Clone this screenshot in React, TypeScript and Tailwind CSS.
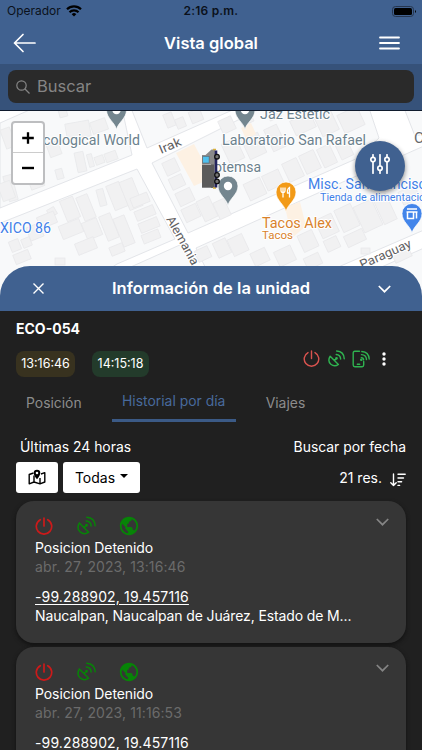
import React from "react";
import { BiWorld } from "react-icons/bi";

const FONT = "font-[Inter,'Liberation_Sans',sans-serif]";

/* Building footprints: x, y, width, height, rotation */
const buildings: number[][] = [
  [66, 122, 24, 16, -10], [59, 109, 8, 8, -15], [91, 120, 16, 12, -20], [76, 152, 9, 20, -12], [88, 154, 5, 13, -15],
  [95, 156, 9, 8, -20], [105, 152, 12, 9, -20], [56, 169, 7, 10, -15], [6, 175, 9, 26, -15], [0, 182, 13, 18, -20],
  [30, 180, 14, 8, -20], [98, 189, 7, 17, -15], [48, 208, 8, 8, -30], [63, 198, 14, 22, -22], [80, 195, 12, 25, -22],
  [110, 183, 14, 26, -22], [124, 179, 14, 30, -22], [131, 195, 18, 10, -22], [135, 208, 20, 10, -22], [139, 220, 20, 10, -22],
  [38, 214, 18, 12, -22], [28, 225, 14, 14, -22], [10, 240, 10, 11, -22], [22, 238, 9, 9, -22], [14, 252, 16, 10, -22],
  [60, 222, 22, 14, -22], [84, 220, 16, 18, -22], [103, 214, 12, 26, -22], [118, 216, 12, 30, -22], [55, 258, 10, 7, 0],
  [76, 240, 20, 12, -22], [110, 245, 14, 9, -22], [142, 232, 18, 9, -22], [3, 128, 10, 20, -20], [48, 142, 12, 14, -20],
  [165, 113, 9, 14, -22], [176, 118, 9, 10, -22], [190, 110, 12, 12, -22], [164, 160, 14, 14, -25], [170, 176, 14, 12, -25],
  [177, 190, 16, 14, -25], [183, 206, 16, 14, -25], [200, 198, 14, 22, -25], [216, 200, 12, 18, -25], [246, 180, 18, 18, -25],
  [264, 172, 18, 16, -25], [285, 160, 16, 20, -25], [302, 152, 16, 20, -25], [320, 146, 14, 20, -25], [338, 142, 13, 16, -25],
  [225, 140, 16, 22, -25], [245, 135, 18, 22, -25], [268, 126, 14, 24, -25], [292, 116, 22, 16, -25], [318, 114, 18, 20, -25],
  [340, 110, 22, 20, -25], [220, 118, 14, 14, -25], [240, 112, 12, 12, -25], [268, 110, 12, 9, -25],
  [196, 248, 14, 12, -25], [215, 240, 14, 16, -25], [230, 236, 16, 18, -25], [252, 250, 16, 14, -25], [276, 248, 18, 16, -25],
  [318, 216, 18, 20, -25], [338, 206, 18, 24, -25], [358, 202, 20, 28, -25], [378, 195, 14, 28, -25], [325, 238, 14, 12, -25],
  [345, 232, 20, 12, -25], [361, 248, 9, 6, 0], [305, 255, 16, 12, -25], [393, 250, 18, 10, -25], [400, 188, 18, 14, -25], [300, 232, 16, 18, -25],
];

const blocks = [
  "M0 123 L34 108 L122 108 L132 155 L0 208Z",
  "M131 108 L212 108 L237 108 L147 148Z",
  "M-2 224 L137 169 L175 239 L117 264 L60 302 L-2 302Z",
  "M152 163 L262 108 L369 108 L379 138 L358 158 L188 233Z",
  "M196 248 L300 201 L424 146 L424 230 L336 268 L280 292 L217 292Z",
  "M404 108 L424 108 L424 134 L415 136Z",
  "M124 270 L182 244 L206 290 L90 290Z",
  "M348 282 L424 248 L424 302 L340 302Z",
];

function Pin({ x, y, color, children }: { x: number; y: number; color: string; children?: React.ReactNode }) {
  return (
    <g transform={`translate(${x} ${y})`}>
      <path d="M0 18.5 C-1.5 11.5 -10 7.5 -10 -1 A10 10 0 0 1 10 -1 C10 7.5 1.5 11.5 0 18.5Z" fill={color} stroke="#fff" strokeWidth=".7" />
      {children ?? <circle r="4.2" cy="-1" fill="#fff" />}
    </g>
  );
}

function Label({ x, y, w, size, color, weight = 400, children }: { x: number; y: number; w: number; size: number; color: string; weight?: number; children: string }) {
  return (
    <text x={x} y={y} textLength={w} lengthAdjust="spacingAndGlyphs" fontSize={size} fill={color} fontWeight={weight} stroke="#fff" strokeWidth="2" strokeLinejoin="round" paintOrder="stroke">
      {children}
    </text>
  );
}

function MapView() {
  return (
    <svg viewBox="0 111 422 190" className="block h-[190px] w-full font-[Roboto,sans-serif]">
      <rect y="100" width="422" height="210" fill="#fff" />
      {blocks.map((d) => <path key={d} d={d} fill="#f8f9fa" stroke="#e0e2e6" strokeWidth=".9" />)}
      {buildings.map(([x, y, w, h, r], i) => (
        <rect key={i} x={x} y={y} width={w} height={h} transform={`rotate(${r} ${x + w / 2} ${y + h / 2})`} fill="#f1f1f2" stroke="#e8e9eb" strokeWidth=".8" />
      ))}
      <path d="M176 153 L194 144 L212 178 L194 186Z M241 128 L251 123 L256 134 L246 139Z M285 207 L300 202 L306 226 L292 238Z" fill="#fdf1e3" />
      <Label x={43} y={145} w={97} size={15} color="#6b818d">cological World</Label>
      <Label x={222} y={145} w={144} size={15} color="#6b818d">Laboratorio San Rafael</Label>
      <Label x={260} y={119} w={70} size={15} color="#6b818d">Jaz Estetic</Label>
      <Label x={214} y={171.500} w={47} size={15} color="#6b818d">otemsa</Label>
      <Label x={0} y={233} w={51} size={15} color="#3f7fe8">XICO 86</Label>
      <Label x={262} y={228} w={70} size={14.500} color="#d9822b">Tacos Alex</Label>
      <Label x={262} y={238.500} w={31} size={11} color="#d9822b">Tacos</Label>
      <Label x={308} y={189} w={126} size={15} color="#3f7fe8">Misc. San Francisco</Label>
      <Label x={320} y={201} w={111} size={11} color="#3f7fe8">Tienda de alimentación</Label>
      <Label x={414} y={143} w={10} size={14} color="#66686b">C</Label>
      <g transform="translate(161 154) rotate(-23)"><Label x={0} y={0} w={23} size={12.500} color="#5f6163">Irak</Label></g>
      <g transform="translate(166 219) rotate(61)"><Label x={0} y={0} w={54} size={12.500} color="#5f6163">Alemania</Label></g>
      <g transform="translate(362 269) rotate(-24)"><Label x={0} y={0} w={55} size={12.500} color="#5f6163">Paraguay</Label></g>
      <Pin x={116.500} y={111} color="#74868f" />
      <Pin x={245} y={111} color="#74868f" />
      <Pin x={228} y={187} color="#74868f" />
      <Pin x={286} y={193} color="#f29a17">
        <path d="M-5-5.500v3q0 2 2 2t2-2v-3M-3-5.500V4.500M3.500 4.500V-5.500Q1-4 1.500 0h2" fill="none" stroke="#fff" strokeWidth="1.300" />
      </Pin>
      <Pin x={412} y={214.500} color="#4285ea">
        <path d="M-5-5.500H5M-5.500-2.500H5.500M-4.500-2.500V4H1.500V-2.500M4.500-2.500V4" fill="none" stroke="#fff" strokeWidth="1.500" />
      </Pin>
      <path d="M202 164V155h3.500l6-5.500h3.500V188h-4V164z" fill="#8a8a8a" />
      <rect x="202" y="164.500" width="12" height="23.200" fill="#5b5b5b" />
      <path d="M202.500 163.500v-7.500h7v7.500z" fill="#5d6a72" />
      <rect x="203" y="156.700" width="5.800" height="6" fill="#4fc0ee" />
      <path d="M213 149.500h3M213 188h3" stroke="#d8b13c" strokeWidth="1.500" />
      <path d="M216 150.500v37" stroke="#23235d" strokeWidth="2.600" />
      <g fill="#777" stroke="#111" strokeWidth="1.300"><circle cx="217" cy="156.700" r="2.300" /><circle cx="217" cy="175" r="2.300" /><circle cx="217" cy="181.400" r="2.300" /></g>
    </svg>
  );
}

function PowerIcon({ className }: { className: string }) {
  return (
    <svg viewBox="0 0 18 18" className={className} fill="none" stroke="currentColor" strokeLinecap="round">
      <path d="M5.300 2.700a7.700 7.700 0 1 0 7.400 0M9 1v8" />
    </svg>
  );
}

function DishIcon({ className }: { className: string }) {
  return (
    <svg viewBox="0 0 18 18" className={className} fill="none" stroke="currentColor" strokeLinecap="round" strokeLinejoin="round">
      <path d="M2.300 6.600L11 15.300Q6.800 18.300 3 15T2.300 6.600zM6.800 11l2-2" />
      <circle cx="9" cy="8.800" r=".7" fill="currentColor" />
      <path d="M8.700 4.700q4.400.2 4.700 4.800M9.200 1.100q7.600.4 8 8.200" />
    </svg>
  );
}

function PhoneSignal() {
  return (
    <svg viewBox="0 0 18 18" className="size-[18px]" fill="none" stroke="currentColor" strokeWidth="1.400" strokeLinecap="round">
      <path d="M7.500 1.300H2.800Q1.200 1.300 1.200 2.900v12.200q0 1.600 1.600 1.600h7.300q1.600 0 1.600-1.600V11.500M5.300 14.200h2.400M9.300 7.600q2.200.1 2.300 2.200M9.500 4.600q4.800.2 5 5M9.800 1.500q7 .5 7.400 7.500" />
      <circle cx="9.300" cy="9.700" r=".6" fill="currentColor" />
    </svg>
  );
}

function MapMarkerIcon() {
  return (
    <svg viewBox="0 0 18 16" className="h-[16px] w-[18px]" fill="none" stroke="black" strokeWidth="1.400" strokeLinejoin="round">
      <path d="M5.500 4L1.200 5.500v9.300L6 13l6 1.800L16.800 13V3.700L13 5M6 6.500V13M12 9v5.800" />
      <path fillRule="evenodd" d="M9 10.200Q5.700 6.500 5.700 4a3.300 3.300 0 0 1 6.600 0Q12.300 6.500 9 10.200zM9 2.700a1.300 1.300 0 1 0 0 2.600 1.300 1.300 0 0 0 0-2.600z" fill="black" stroke="none" />
    </svg>
  );
}

function SortIcon() {
  return (
    <svg viewBox="0 0 16 14" className="ml-[8px] mt-[5px] h-[14px] w-[16px]" fill="none" stroke="white" strokeWidth="1.400" strokeLinecap="round" strokeLinejoin="round">
      <path d="M3.500 1v11.500M.8 9.800l2.700 2.800 2.700-2.800M8 1.300h7.200M8 5h5.500M8 8.700h3.600M8 12.400h1.600" />
    </svg>
  );
}

function Chevron({ className }: { className: string }) {
  return <svg viewBox="0 0 13 8" className={className} fill="none" stroke="currentColor" strokeWidth="1.700"><path d="M.8 1l5.700 5.700L12.200 1" /></svg>;
}

function Position({ time }: { time: string }) {
  return (
    <article className="h-[142px] shrink-0 rounded-[18px] bg-[#363636] px-[19px] pt-[14px] text-[14px] leading-[19px] text-white shadow-[0_2px_4px_#111]">
      <div className="flex h-[22px] items-center">
        <PowerIcon className="size-[18px] stroke-[1.7] text-[#cc1a1a]" />
        <DishIcon className="ml-[24px] size-[19px] stroke-[1.4] text-[#078407]" />
        <BiWorld className="ml-[22px] size-[22px] text-[#078407]" />
        <Chevron className="mb-[7px] ml-auto mr-[-2px] w-[13px] text-[#858585]" />
      </div>
      <p className="mt-[1px] tracking-[-0.08px]">Posicion Detenido</p>
      <p className="tracking-[.1px] text-[#6b6b6b]">{time}</p>
      <p className="mt-[11px]"><span className="tracking-[.14px] underline underline-offset-2">-99.288902, 19.457116</span></p>
      <p className="whitespace-nowrap tracking-[-0.12px]">Naucalpan, Naucalpan de Juárez, Estado de M...</p>
    </article>
  );
}

export default function App() {
  return (
    <main className={`flex h-[750px] w-[422px] flex-col overflow-hidden bg-[#202020] text-white ${FONT}`}>
      <header className="h-[64px] shrink-0 bg-[#406190]">
        <div className="grid h-[22px] grid-cols-3 items-center text-[12px] text-[#0b111b]">
          <span className="flex items-center gap-[5px] pl-[7px]">
            Operador
            <svg viewBox="0 0 16 12" className="mb-px h-[12px] w-[16px]" fill="none" stroke="black" strokeWidth="2.200"><path d="M1 4.300a10 10 0 0 1 14 0M3.500 7.200a6.400 6.400 0 0 1 9 0" /><path d="M8 11.500L5.700 9.200a3.300 3.300 0 0 1 4.600 0z" fill="black" stroke="none" /></svg>
          </span>
          <span className="text-center font-semibold tracking-[.2px]">2:16 p.m.</span>
          <svg viewBox="0 0 25 11" className="mr-[5px] h-[11px] w-[25px] justify-self-end"><rect x=".5" y=".5" width="21" height="10" rx="3" fill="none" stroke="#26364f" /><rect x="2" y="2" width="18" height="7" rx="1.500" /><path d="M23 4q2 1.500 0 3" /></svg>
        </div>
        <div className="grid h-[42px] grid-cols-[1fr_auto_1fr] items-center pl-[13px] pr-[13px]">
          <svg viewBox="0 0 24 20" className="w-[24px]" fill="none" stroke="white" strokeWidth="1.700" strokeLinecap="round" strokeLinejoin="round"><path d="M22 10H1.500M10 1.500L1.500 10l8.500 8.500" /></svg>
          <h1 className="text-[16.500px] font-semibold">Vista global</h1>
          <svg viewBox="0 0 21 14" className="mr-[9px] w-[21px] justify-self-end" stroke="white" strokeWidth="1.800" strokeLinecap="round"><path d="M1 1.500h19M1 7h19M1 12.500h19" /></svg>
        </div>
      </header>
      <div className="h-[47px] shrink-0 border-b border-[#101b2d] bg-[#36527a] px-2 pt-[6px]">
        <div className="flex h-[33px] items-center gap-[7px] rounded-[8px] bg-[#2a2a2a] pl-[8px] text-[16.500px] text-[#858585]">
          <svg viewBox="0 0 14 14" className="w-[14px]" fill="none" stroke="currentColor" strokeWidth="1.200"><circle cx="5.500" cy="5.500" r="4.700" /><path d="M9 9l4.500 4.500" /></svg>
          Buscar
        </div>
      </div>
      <div className="relative -mb-[35px] shrink-0">
        <MapView />
        <div className="absolute left-[11px] top-[10px] h-[64px] w-[34px] divide-y divide-[#ccc] rounded-[4px] border-2 border-[#bdbec0] bg-white text-black">
          <svg viewBox="0 0 30 30" className="h-[30px] w-[30px]" stroke="black" strokeWidth="2.400"><path d="M9 15.500h12M15 9.500v12" /></svg>
          <svg viewBox="0 0 30 30" className="h-[30px] w-[30px]" stroke="black" strokeWidth="2.400"><path d="M9 15h12" /></svg>
        </div>
        <div className="absolute left-[355px] top-[30px] flex size-[50px] items-center justify-center rounded-full bg-[#406190] shadow-[0_2px_5px_#0007]">
          <svg viewBox="0 0 20 20" className="mb-[4px] w-[20px]" fill="none" stroke="white" strokeWidth="1.700" strokeLinecap="round"><path d="M3 .8v2.400M3 8v11.200M10 .8v11M10 16.500v2.700M17 .8v2.400M17 8v11.200" /><circle cx="3" cy="5.600" r="2.200" /><circle cx="10" cy="14.200" r="2.200" /><circle cx="17" cy="5.600" r="2.200" /></svg>
        </div>
      </div>
      <section className="relative flex min-h-0 grow flex-col">
        <header className="flex h-[45px] shrink-0 items-center justify-between rounded-t-[30px] bg-[#406190] pl-[33px] pr-[31px]">
          <svg viewBox="0 0 11 11" className="w-[11px]" stroke="white" strokeWidth="1.400"><path d="M.5.5l10 10M10.500.5l-10 10" /></svg>
          <h2 className="text-[16.500px] font-semibold tracking-[.06px]">Información de la unidad</h2>
          <Chevron className="w-[13px]" />
        </header>
        <div className="flex min-h-0 grow flex-col bg-[#202020] px-4">
          <h3 className="mt-[8px] h-[20px] text-[14px] font-bold leading-[20px]">ECO-054</h3>
          <div className="mt-[11px] flex h-[27px] items-center">
            <span className="flex h-[26px] w-[59px] items-center justify-center rounded-[8px] bg-[#38321f] pt-px text-[12.500px]">13:16:46</span>
            <span className="ml-[17px] flex h-[26px] w-[57px] items-center justify-center rounded-[8px] bg-[#233b2b] pt-px text-[12.500px]">14:15:18</span>
            <div className="mb-[10px] ml-auto mr-[20px] flex items-center">
              <PowerIcon className="size-[17px] stroke-[1.5] text-[#d9534f]" />
              <DishIcon className="ml-[8px] size-[17px] stroke-[1.5] text-[#2fb350]" />
              <span className="ml-[7px] text-[#2fb350]"><PhoneSignal /></span>
              <svg viewBox="0 0 4 14" className="ml-[12px] w-[4px]" fill="white"><circle cx="2" cy="2" r="1.700" /><circle cx="2" cy="7" r="1.700" /><circle cx="2" cy="12" r="1.700" /></svg>
            </div>
          </div>
          <nav className="mt-[6px] flex h-[43px] items-center text-[13.900px] text-[#8c8c8c]">
            <span className="ml-[10px] pt-[2px]">Posición</span>
            <span className="ml-[30px] flex h-[39px] w-[124px] items-center justify-center border-b-[3px] border-[#3b5a86] text-[#486a9c]">Historial por día</span>
            <span className="ml-[30px] pt-[2px]">Viajes</span>
          </nav>
          <div className="mt-[15px] flex h-[25px] items-center justify-between pl-[4px] text-[13.900px]"><span>Últimas 24 horas</span><span>Buscar por fecha</span></div>
          <div className="mt-[4px] flex h-[32px] items-center">
            <button className="flex h-[31px] w-[42px] items-center justify-center rounded-[3px] bg-white text-black"><MapMarkerIcon /></button>
            <button className="ml-[5px] flex h-[31px] w-[77px] items-center justify-center gap-[5px] rounded-[3px] bg-white text-[14px] text-black">Todas<span className="mb-[2px] border-x-4 border-t-4 border-x-transparent border-t-black" /></button>
            <span className="ml-auto text-[14px]">21 res.</span>
            <SortIcon />
          </div>
          <div className="mt-[8px] flex flex-col gap-1">
            <Position time="abr. 27, 2023, 13:16:46" />
            <Position time="abr. 27, 2023, 11:16:53" />
          </div>
        </div>
      </section>
    </main>
  );
}
